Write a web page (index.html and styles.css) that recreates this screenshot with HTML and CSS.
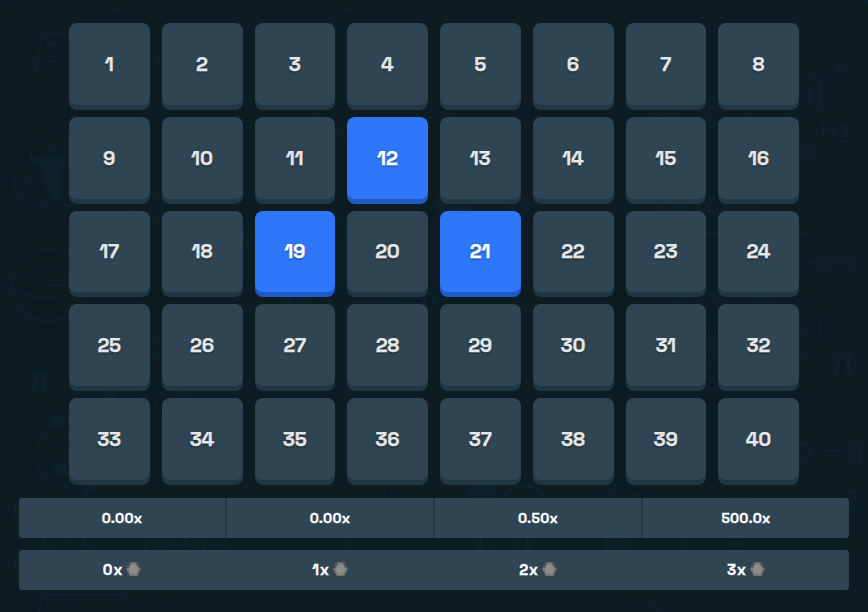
FILE: index.html
```html
<!DOCTYPE html>
<html lang="en">
<head>
    <meta charset="UTF-8">
    <meta name="viewport" content="width=device-width, initial-scale=1.0">
    <title>Keno</title>
    <link rel="stylesheet" href="styles.css">
</head>
<body>
    <svg class="symbols" width="0" height="0" aria-hidden="true">
        <symbol id="gem" viewBox="0 0 15 14">
            <path d="M3 0.5h9l2.8 6.5-3.3 6.5h-8L0.2 7z" fill="#777"/>
            <path d="M2.8 0.5h2L4.4 3 2.6 5.6 0.6 6.4zM12.2 0.5h-2l0.4 2.5 1.8 2.6 2 0.8z" fill="#504f50"/>
            <path d="M4.8 0.5h5.4l-0.4 2.3H5.2z" fill="#7a7878"/>
            <path d="M5 2.6h5l2.4 4.2L10.2 11.4H4.8L2.6 6.8z" fill="#8e8c8b"/>
            <path d="M4.8 11.4h5.4l1.3 2.1h-8z" fill="#848281"/>
        </symbol>
    </svg>
    <main class="game">
        <svg class="doodles" viewBox="0 0 868 612" aria-hidden="true">
            <g class="lines">
                <path d="M26 57l5-3 5 17 6-38h30"/>
                <circle cx="51" cy="154" r="20"/>
                <circle cx="37" cy="182" r="23"/>
                <circle cx="69" cy="182" r="23"/>
                <circle cx="146" cy="208" r="17"/>
                <circle cx="48" cy="285" r="36"/>
                <path d="M12 289q34 17 70 0"/>
                <path d="M16 278q32-13 52-4" stroke-dasharray="8 6"/>
                <path d="M46 285h30M54 275v7"/>
                <circle cx="75" cy="455" r="38"/>
                <circle cx="75" cy="455" r="22"/>
                <circle cx="75" cy="455" r="10"/>
                <circle cx="172" cy="405" r="16"/>
                <circle cx="172" cy="464" r="18"/>
                <path d="M155 326q-5 30 12 44M156 340h10M157 355h10"/>
                <path d="M39 612l3-17h84v4"/>
                <path d="M798 70l22 11v27l-22 13M820 81l12-7M820 108l13 8M810 87v18"/>
                <path d="M744 116l26-16 28 18M698 93q20 12 7 27"/>
                <path d="M798 280l6-17h11M700 233h110"/>
                <circle cx="786" cy="327" r="35"/>
                <path d="M790 340q20-8 23-20"/>
                <circle cx="699" cy="328" r="34"/>
                <circle cx="712" cy="342" r="7"/>
                <circle cx="807" cy="153" r="7"/>
                <circle cx="332" cy="117" r="16"/>
                <path d="M337 132l4 8 7-5M442 112v8M453 112v8M497 200l16 7 14-9"/>
                <circle cx="520" cy="207" r="8"/>
                <path d="M430 250l7 6-8 5M342 227h10M342 234h10"/>
                <circle cx="524" cy="505" r="20" stroke-dasharray="2 4" stroke-width="5"/>
                <circle cx="504" cy="546" r="24" stroke-dasharray="2 4" stroke-width="5"/>
                <circle cx="504" cy="542" r="16"/>
                <ellipse cx="645" cy="528" rx="43" ry="34"/>
                <path d="M600 490l8 5M606 485l6 7M614 483l2 8M607 538h17v14h-17zM615 541v8M611 545h8"/>
                <path d="M726 498h21M726 544h20M350 540v10M314 485v7M384 485v7M391 485v7"/>
                <path d="M623 612q18-24 36 0"/>
            </g>
            <g class="fills">
                <path d="M32 160q20-6 38 0l-17 16zM46 180q7-10 16 0l-3 15q-5 9-10 0z"/>
                <circle cx="57" cy="421" r="7"/>
                <circle cx="61" cy="470" r="7"/>
                <circle cx="90" cy="488" r="7"/>
                <circle cx="109" cy="393" r="6"/>
                <circle cx="482" cy="490" r="14"/>
                <circle cx="454" cy="204" r="18"/>
            </g>
            <g class="notes">
                <text x="13" y="13" font-size="12">H</text>
                <text x="112" y="13" font-size="12">H</text>
                <text x="343" y="13" font-size="12">H</text>
                <text x="608" y="13" font-size="12">π</text>
                <text x="45" y="62" font-size="28">2</text>
                <text x="155" y="64" font-size="22">a</text>
                <text x="48" y="156" font-size="18">b</text>
                <text x="25" y="187" font-size="18">a</text>
                <text class="pi" x="29" y="392" font-size="44">π</text>
                <text x="835" y="76" font-size="20">N</text>
                <text x="820" y="139" font-size="23">H<tspan dy="3">2</tspan></text>
                <text x="652" y="116" font-size="18">ON</text>
                <text x="655" y="212" font-size="24">CaH2  Age</text>
                <text x="816" y="271" font-size="19">80°C</text>
                <text class="pi" x="833" y="374" font-size="44">π</text>
                <text x="804" y="395" font-size="18">2</text>
                <text x="799" y="463" font-size="28" textLength="65" lengthAdjust="spacing">2 = 0</text>
                <text x="846" y="508" font-size="24">2</text>
                <text x="240" y="248" font-size="18">m</text>
                <text x="280" y="309" font-size="24">4/2 + 2 − 4 = 0</text>
                <text x="12" y="519" font-size="24">F</text>
                <text x="12" y="572" font-size="24">F</text>
                <text x="41" y="547" font-size="26">c = c</text>
                <text x="143" y="554" font-size="26">(A+B)−C</text>
                <text x="46" y="609" font-size="14" textLength="125" lengthAdjust="spacing">2 + 7 = 9</text>
            </g>
        </svg>
        <div class="board">
            <button class="tile">1</button>
            <button class="tile">2</button>
            <button class="tile">3</button>
            <button class="tile">4</button>
            <button class="tile">5</button>
            <button class="tile">6</button>
            <button class="tile">7</button>
            <button class="tile">8</button>
            <button class="tile">9</button>
            <button class="tile">10</button>
            <button class="tile">11</button>
            <button class="tile selected">12</button>
            <button class="tile">13</button>
            <button class="tile">14</button>
            <button class="tile">15</button>
            <button class="tile">16</button>
            <button class="tile">17</button>
            <button class="tile">18</button>
            <button class="tile selected">19</button>
            <button class="tile">20</button>
            <button class="tile selected">21</button>
            <button class="tile">22</button>
            <button class="tile">23</button>
            <button class="tile">24</button>
            <button class="tile">25</button>
            <button class="tile">26</button>
            <button class="tile">27</button>
            <button class="tile">28</button>
            <button class="tile">29</button>
            <button class="tile">30</button>
            <button class="tile">31</button>
            <button class="tile">32</button>
            <button class="tile">33</button>
            <button class="tile">34</button>
            <button class="tile">35</button>
            <button class="tile">36</button>
            <button class="tile">37</button>
            <button class="tile">38</button>
            <button class="tile">39</button>
            <button class="tile">40</button>
        </div>
        <div class="bar payouts">
            <div class="cell">0.00x</div>
            <div class="cell">0.00x</div>
            <div class="cell">0.50x</div>
            <div class="cell">500.0x</div>
        </div>
        <div class="bar hits">
            <div class="cell">0x <svg class="gem"><use href="#gem"/></svg></div>
            <div class="cell">1x <svg class="gem"><use href="#gem"/></svg></div>
            <div class="cell">2x <svg class="gem"><use href="#gem"/></svg></div>
            <div class="cell">3x <svg class="gem"><use href="#gem"/></svg></div>
        </div>
    </main>
</body>
</html>
```

FILE: styles.css
```css
* {
    box-sizing: border-box;
}

body {
    margin: 0;
    background: #0f212e;
    font-family: 'Space Grotesk', Inter, sans-serif;
    font-weight: 700;
    color: #fff;
}

.symbols {
    display: block;
}

.game {
    position: relative;
    height: 612px;
    padding: 23px 19px 22px;
    background: #0d1c22;
    border-radius: 6px 6px 0 0;
    overflow: hidden;
}

/* chalk drawings behind the board */
.doodles {
    position: absolute;
    inset: 0;
    width: 868px;
    height: 612px;
}

.lines {
    fill: none;
    stroke: #0e202a;
    stroke-width: 2;
    stroke-linecap: round;
}

.fills {
    fill: #0e202b;
}

.notes {
    fill: #0e212c;
    font-family: 'Open Sans', sans-serif;
    font-weight: 400;
}

.notes .pi {
    font-family: 'Liberation Serif', serif;
    font-style: italic;
}

.board {
    position: relative;
    display: grid;
    grid-template-columns: repeat(8, 1fr);
    grid-auto-rows: 81.75px;
    gap: 12px;
    width: 730px;
    margin: 0 auto 18.25px;
}

.tile {
    padding: 0 0.5px 0 0;
    border: none;
    border-radius: 8px;
    background: #2f4553;
    box-shadow: 0 5px 0 #213743;
    color: #e6e7e9;
    font-family: inherit;
    font-size: 20px;
    font-weight: 700;
    letter-spacing: -0.2px;
    text-shadow: 0 2px 2px rgba(0, 0, 0, 0.25);
    -webkit-text-stroke: 0.25px currentColor;
    cursor: pointer;
}

.tile.selected {
    background: #2f77f9;
    box-shadow: 0 5px 0 #1f5bc6;
    color: #fff;
}

.bar {
    position: relative;
    display: grid;
    grid-template-columns: repeat(4, 1fr);
    gap: 2px;
    height: 40px;
    border-radius: 4px;
    overflow: hidden;
    font-size: 14px;
    -webkit-text-stroke: 0.3px currentColor;
}

.payouts {
    margin-bottom: 12px;
    background: #213743;
    letter-spacing: 0.25px;
}

.hits {
    background: #2f4553;
    font-size: 15px;
    letter-spacing: 0.9px;
}

.cell {
    display: flex;
    align-items: center;
    justify-content: center;
    gap: 3px;
    background: #2f4553;
}

.hits .cell {
    padding-bottom: 2px;
}

.gem {
    width: 15px;
    height: 14px;
}
```
